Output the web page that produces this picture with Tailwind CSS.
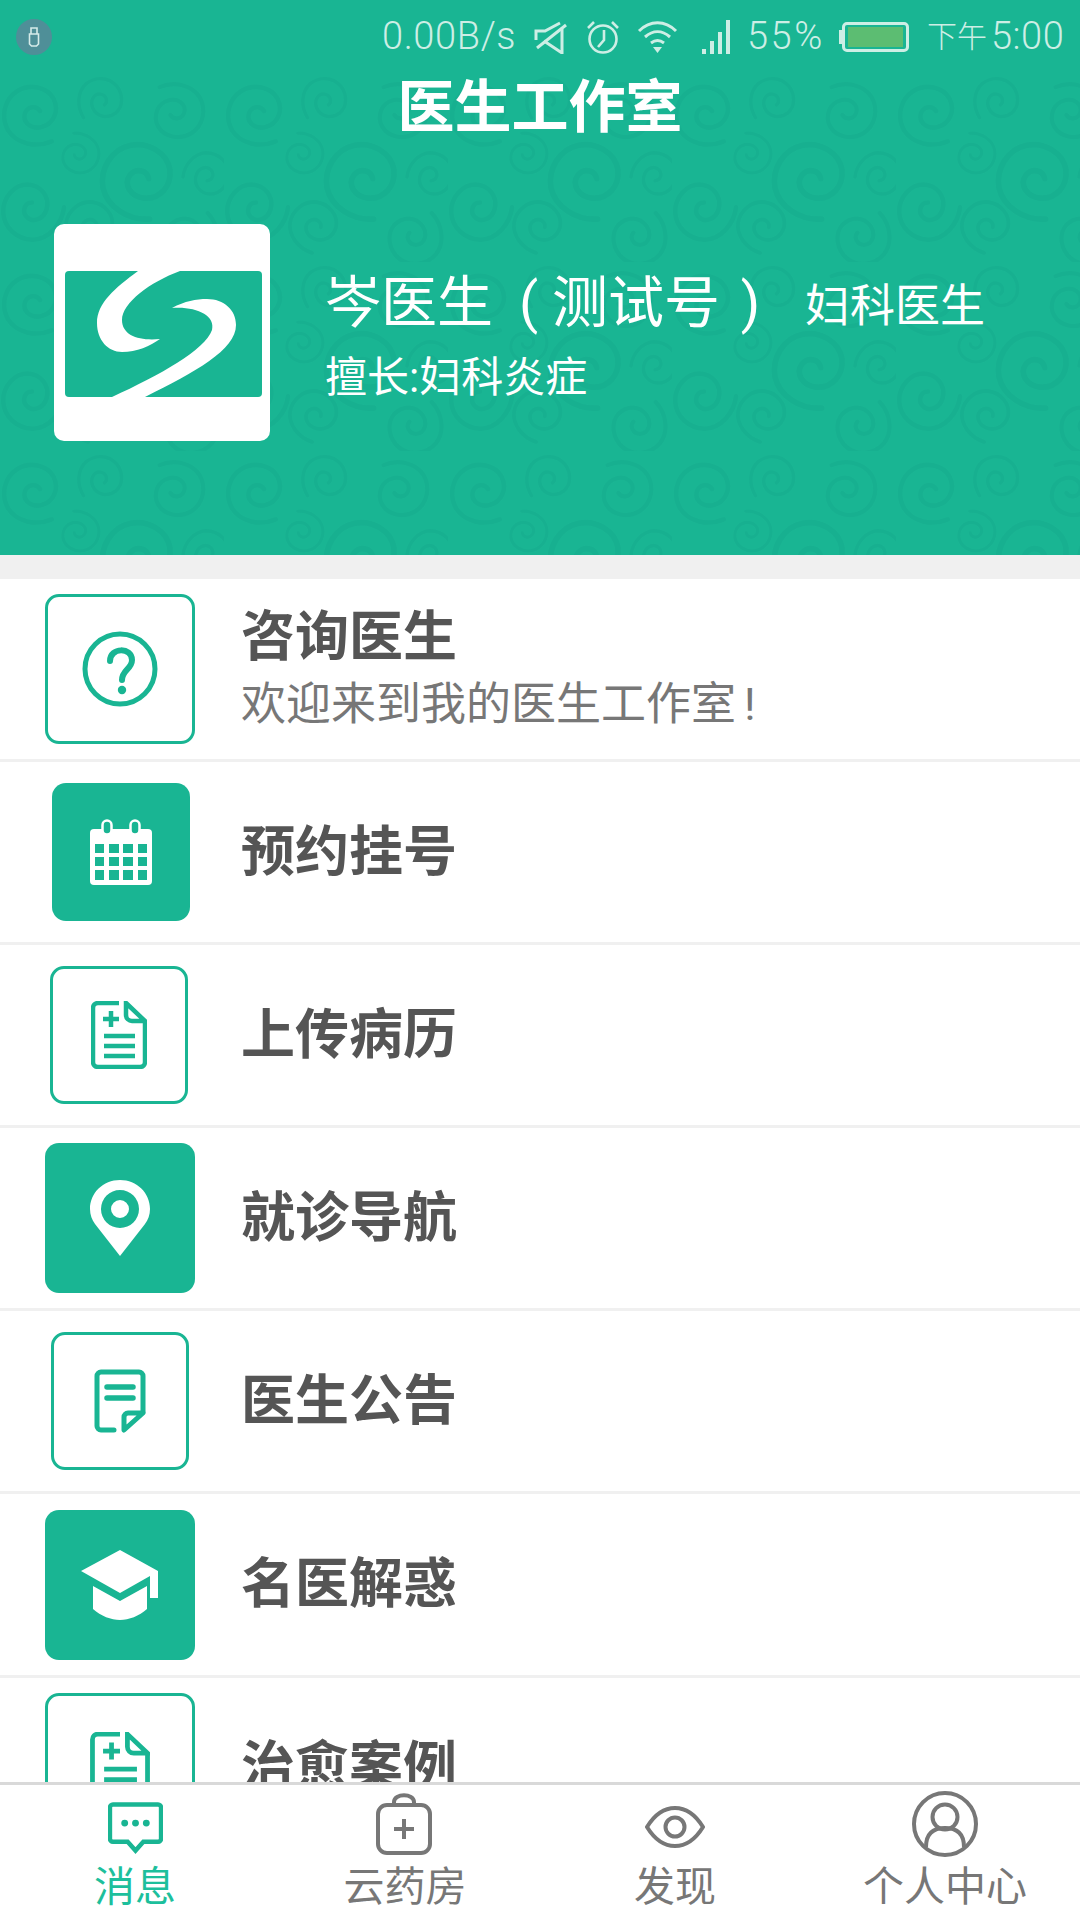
<!DOCTYPE html>
<html lang="zh-CN">
<head>
  <meta charset="UTF-8">
  <meta name="viewport" content="width=device-width, initial-scale=1.0">
  <title>医生工作室</title>
  <script src="https://cdn.jsdelivr.net/npm/@tailwindcss/browser@4"></script>
</head>
<body class="bg-white font-['Roboto','Noto_Sans_CJK_SC',sans-serif]">
<div class="w-[1080px] h-[1920px] flex flex-col overflow-hidden">

  <!-- Header -->
  <header class="relative h-[555px] shrink-0 bg-[#19b593] text-white">
    <svg class="absolute left-0 top-[73px]" width="1080" height="482">
      <defs>
        <path id="spiral" d="M6 2C2-5-9-4-12 5-15 16-4 24 8 21 23 17 29 1 22-13 14-27-6-31-21-22-37-12-41 9-32 25-22 41 1 46 20 38"/>
        <pattern id="swirl" width="224" height="189" patternUnits="userSpaceOnUse">
          <g transform="scale(.7)" fill="none" stroke="#17b090" stroke-width="5.500" stroke-linecap="round">
            <use href="#spiral" transform="translate(50 52) scale(1.200)"/>
            <use href="#spiral" transform="translate(150 40) rotate(80) scale(.9)"/>
            <use href="#spiral" transform="translate(250 62) rotate(180) scale(1.100)"/>
            <use href="#spiral" transform="translate(110 120) rotate(200) scale(.8)"/>
            <use href="#spiral" transform="translate(205 145) rotate(20) scale(1.500)"/>
            <use href="#spiral" transform="translate(300 150) rotate(120) scale(.9)"/>
            <use href="#spiral" transform="translate(40 190) rotate(300) scale(1.200)"/>
            <use href="#spiral" transform="translate(135 215) rotate(40) scale(1)"/>
            <use href="#spiral" transform="translate(265 235) rotate(250) scale(1.100)"/>
          </g>
        </pattern>
      </defs>
      <rect width="1080" height="482" fill="url(#swirl)"/>
    </svg>

    <!-- Status bar -->
    <div class="relative h-[73px] flex items-center pl-4 pr-[17px] text-[#cdeee5] text-[38px] font-light">
      <div class="w-[36px] h-[36px] rounded-full bg-[#4f8f98] flex items-center justify-center">
        <svg width="12" height="20" viewBox="0 0 12 20" fill="none" stroke="#d5ebe9" stroke-width="1.600"><path d="M3 1h6v6H3zM1.500 7h9v10l-2 2h-5l-2-2z"/></svg>
      </div>
      <div class="ml-auto flex items-center">
        <span class="w-[131px] whitespace-nowrap tracking-[0.6px]">0.00B/s</span>
        <svg class="ml-[21px]" width="33" height="34" viewBox="0 0 33 34" fill="none" stroke="#cdeee5" stroke-width="3"><path d="M28 9v24L10 21"/><path d="M2 20v-9h9l15-8"/><path d="M3 28 32 5"/></svg>
        <svg class="ml-[19px]" width="34" height="34" viewBox="0 0 34 34" fill="none" stroke="#cdeee5" stroke-width="2.600"><circle cx="17" cy="19" r="13.500"/><path d="M18 10v10l-6 7M2 8l6-6M32 8l-6-6"/></svg>
        <svg class="ml-[17px]" width="41" height="34" viewBox="0 0 41 34" fill="none" stroke="#cdeee5" stroke-width="3"><path d="M2 11c11-11 26-11 37 0M8 17c8-7 17-7 25 0M14 23c4-3 9-3 13 0"/><path d="M16 27h9l-4.500 6z" fill="#cdeee5" stroke="none"/></svg>
        <svg class="ml-[24px]" width="28" height="34" viewBox="0 0 28 34" fill="#cdeee5"><path d="M0 29h4v5H0zM8 21h4v13H8zM16 12h4v22h-4zM24 0h4v34h-4z"/></svg>
        <span class="ml-[17px] w-[75px] whitespace-nowrap tracking-[2.500px]">55%</span>
        <div class="ml-[17px] flex items-center">
          <div class="w-[3px] h-[14px] bg-[#cdeee5]"></div>
          <div class="w-[67px] h-[30px] border-[3px] border-[#cdeee5] rounded-[5px] px-[3px] py-[2px]">
            <div class="w-full h-full bg-[#5cbd72]"></div>
          </div>
        </div>
        <span class="ml-[18px] w-[60px] text-[30px] whitespace-nowrap">下午</span>
        <span class="ml-[4px] w-[72px] whitespace-nowrap tracking-[0.5px]">5:00</span>
      </div>
    </div>

    <h1 class="relative text-center text-[57px] leading-[70px] font-bold">医生工作室</h1>

    <!-- Doctor info -->
    <div class="relative flex items-center pl-[54px] mt-[81px]">
      <div class="w-[216px] h-[217px] bg-white rounded-[10px] shrink-0">
        <svg width="216" height="217" viewBox="54 224 216 217">
          <rect x="65" y="271" width="197" height="126" rx="4" fill="#19b593"/>
          <path d="M138 271C115 288 97 303 97 323 97 340 108 352 122 352 137 352 150 346 160 339 140 341 122 336 122 320 122 303 150 282 180 271Z" fill="#fff"/>
          <path d="M172 308C185 301 196 299 207 299 224 299 236 310 236 325 236 350 195 372 145 397H112C160 375 205 350 212 330 216 315 195 306 172 308Z" fill="#fff"/>
        </svg>
      </div>
      <div class="ml-[55px] pt-[6px] text-white">
        <div class="flex items-baseline whitespace-nowrap">
          <span class="text-[56px] leading-[70px]">岑医生<span class="inline-block w-[59px] pl-[12px] text-center">(</span>测试号<span class="inline-block w-[55px] pl-[6px] text-center">)</span></span>
          <span class="ml-[30px] text-[45px]">妇科医生</span>
        </div>
        <p class="text-[42px] leading-[50px] mt-[13px] whitespace-nowrap">擅长:妇科炎症</p>
      </div>
    </div>
  </header>

  <div class="h-[24px] shrink-0 bg-[#f0f0f0]"></div>

  <!-- Menu list -->
  <main class="flex-1 overflow-hidden">
    <a class="h-[183.100px] flex items-center border-b-[3px] border-[#f0f0f0]">
      <div class="ml-[45px] w-[150px] flex justify-center">
        <div class="w-[150px] h-[150px] rounded-[14px] border-[3px] border-[#19b593] flex items-center justify-center">
          <svg width="76" height="76" viewBox="0 0 76 76" fill="none" stroke="#19b593" stroke-width="5"><circle cx="38" cy="38" r="35"/><path d="M28 30c0-14 22-14 22-1 0 9-10 10-10 20" stroke-width="6" stroke-linecap="round"/><circle cx="40" cy="59" r="4.200" fill="#19b593" stroke="none"/></svg>
        </div>
      </div>
      <div class="ml-[46px]">
        <h2 class="text-[54px] leading-[64px] font-bold text-[#555]">咨询医生</h2>
        <p class="mt-[8px] text-[45px] leading-[54px] text-[#777] whitespace-nowrap">欢迎来到我的医生工作室<span class="ml-[8px]">!</span></p>
      </div>
    </a>

    <a class="h-[183.100px] flex items-center border-b-[3px] border-[#f0f0f0]">
      <div class="ml-[45px] w-[150px] flex justify-center">
        <div class="ml-[1px] w-[138px] h-[138px] rounded-[14px] bg-[#19b593] flex items-center justify-center">
          <svg width="62" height="66" viewBox="0 0 62 66" fill="#fff"><path d="M4 10h54a4 4 0 0 1 4 4v48a4 4 0 0 1-4 4H4a4 4 0 0 1-4-4V14a4 4 0 0 1 4-4z"/><rect x="12.500" y="1.500" width="9" height="14" rx="4.500" fill="#19b593" stroke="#fff" stroke-width="2.500"/><rect x="40.500" y="1.500" width="9" height="14" rx="4.500" fill="#19b593" stroke="#fff" stroke-width="2.500"/><path fill="#19b593" d="M5 25h9v9H5zM19 25h10v9H19zM33 25h10v9H33zM48 25h9v9h-9zM5 38h9v9H5zM19 38h10v9H19zM33 38h10v9H33zM48 38h9v9h-9zM5 51h9v10H5zM19 51h10v10H19zM33 51h10v10H33zM48 51h9v10h-9z"/></svg>
        </div>
      </div>
      <h2 class="ml-[46px] text-[54px] font-bold text-[#555]">预约挂号</h2>
    </a>

    <a class="h-[183.100px] flex items-center border-b-[3px] border-[#f0f0f0]">
      <div class="ml-[45px] w-[150px] flex justify-center">
        <div class="mr-[2px] w-[138px] h-[138px] rounded-[14px] border-[3px] border-[#19b593] flex items-center justify-center">
          <svg width="56" height="68" viewBox="0 0 56 68" fill="none" stroke="#19b593" stroke-width="4.500"><path d="M28 2H7a5 5 0 0 0-5 5v54a5 5 0 0 0 5 5h42a5 5 0 0 0 5-5V20"/><path d="M35 2l19 18H41a6 6 0 0 1-6-6z"/><path d="M12 18h16M20 10v16M13 35h31M13 45h31M13 55h31"/></svg>
        </div>
      </div>
      <h2 class="ml-[46px] text-[54px] font-bold text-[#555]">上传病历</h2>
    </a>

    <a class="h-[183.100px] flex items-center border-b-[3px] border-[#f0f0f0]">
      <div class="ml-[45px] w-[150px] flex justify-center">
        <div class="w-[150px] h-[150px] rounded-[14px] bg-[#19b593] flex items-center justify-center">
          <svg width="60" height="76" viewBox="0 0 60 76" fill="#fff"><path fill-rule="evenodd" d="M30 0c17 0 30 13 30 29 0 6-2 11-5 15L30 76 5 44c-3-4-5-9-5-15C0 13 13 0 30 0zm0 10a19 19 0 1 0 0 38 19 19 0 0 0 0-38zm0 10a9 9 0 1 1 0 18 9 9 0 0 1 0-18z"/></svg>
        </div>
      </div>
      <h2 class="ml-[46px] text-[54px] font-bold text-[#555]">就诊导航</h2>
    </a>

    <a class="h-[183.100px] flex items-center border-b-[3px] border-[#f0f0f0]">
      <div class="ml-[45px] w-[150px] flex justify-center">
        <div class="w-[138px] h-[138px] rounded-[14px] border-[3px] border-[#19b593] flex items-center justify-center">
          <svg width="52" height="64" viewBox="0 0 52 64" fill="none" stroke="#19b593" stroke-width="5" stroke-linecap="round" stroke-linejoin="round"><path d="M20 61H7a4 4 0 0 1-4-4V7a4 4 0 0 1 4-4h38a4 4 0 0 1 4 4v36"/><path d="M13 18h26M13 29h26" stroke-width="5.500"/><path d="M30 61V48a4 4 0 0 1 4-4h15z"/></svg>
        </div>
      </div>
      <h2 class="ml-[46px] text-[54px] font-bold text-[#555]">医生公告</h2>
    </a>

    <a class="h-[183.100px] flex items-center border-b-[3px] border-[#f0f0f0]">
      <div class="ml-[45px] w-[150px] flex justify-center">
        <div class="w-[150px] h-[150px] rounded-[14px] bg-[#19b593] flex items-center justify-center">
          <svg width="78" height="70" viewBox="0 0 78 70" fill="#fff"><path d="M39 0 0 21l39 22 30-17v22h8V21z"/><path d="M12 36v23c8 7 18 11 27 11s19-4 27-11V36L39 51z"/></svg>
        </div>
      </div>
      <h2 class="ml-[46px] text-[54px] font-bold text-[#555]">名医解惑</h2>
    </a>

    <a class="h-[183.100px] flex items-center border-b-[3px] border-[#f0f0f0]">
      <div class="ml-[45px] w-[150px] flex justify-center">
        <div class="w-[150px] h-[150px] rounded-[14px] border-[3px] border-[#19b593] flex items-center justify-center">
          <svg width="60" height="72" viewBox="0 0 56 68" fill="none" stroke="#19b593" stroke-width="4.500"><path d="M28 2H7a5 5 0 0 0-5 5v54a5 5 0 0 0 5 5h42a5 5 0 0 0 5-5V20"/><path d="M35 2l19 18H41a6 6 0 0 1-6-6z"/><path d="M12 18h16M20 10v16M13 35h31M13 45h31M13 55h31"/></svg>
        </div>
      </div>
      <h2 class="ml-[46px] text-[54px] font-bold text-[#555]">治愈案例</h2>
    </a>
  </main>

  <!-- Bottom tabs -->
  <nav class="h-[138px] shrink-0 bg-white border-t-[3px] border-[#d9d9d9] grid grid-cols-4 text-[#777] text-[41px] leading-[50px]">
    <div class="flex flex-col items-center text-[#1dbf9c]">
      <div class="h-[77px] flex items-center pt-[8px]">
        <svg width="55" height="52" viewBox="0 0 56 52" fill="none" stroke="#19b593" stroke-width="4.500"><path d="M5 2h46a3 3 0 0 1 3 3v32a3 3 0 0 1-3 3H36l-8 9-8-9H5a3 3 0 0 1-3-3V5a3 3 0 0 1 3-3z"/><g fill="#19b593" stroke="none"><circle cx="17" cy="21" r="3.500"/><circle cx="28" cy="21" r="3.500"/><circle cx="39" cy="21" r="3.500"/></g></svg>
      </div>
      <span>消息</span>
    </div>
    <div class="flex flex-col items-center">
      <div class="h-[77px] flex items-center pr-[2px]">
        <svg width="56" height="62" viewBox="0 0 56 62" fill="none" stroke="#777" stroke-width="4"><path d="M18 12V9c0-9 20-9 20 0v3"/><rect x="2" y="12" width="52" height="48" rx="9"/><path d="M28 26v20M18 36h20"/></svg>
      </div>
      <span>云药房</span>
    </div>
    <div class="flex flex-col items-center">
      <div class="h-[77px] flex items-center pt-[6px]">
        <svg width="60" height="42" viewBox="0 0 60 42" fill="none" stroke="#777" stroke-width="4"><path d="M2 21C10 8 20 2 30 2s20 6 28 19c-8 13-18 19-28 19S10 34 2 21z"/><circle cx="30" cy="21" r="9.500"/></svg>
      </div>
      <span>发现</span>
    </div>
    <div class="flex flex-col items-center">
      <div class="h-[77px] flex items-center pt-[1px]">
        <svg width="66" height="66" viewBox="0 0 66 66" fill="none" stroke="#777" stroke-width="4"><circle cx="33" cy="33" r="31"/><circle cx="33" cy="26" r="12.500"/><path d="M14 56c0-14 8-19 19-19s19 5 19 19"/></svg>
      </div>
      <span>个人中心</span>
    </div>
  </nav>
</div>
</body>
</html>
